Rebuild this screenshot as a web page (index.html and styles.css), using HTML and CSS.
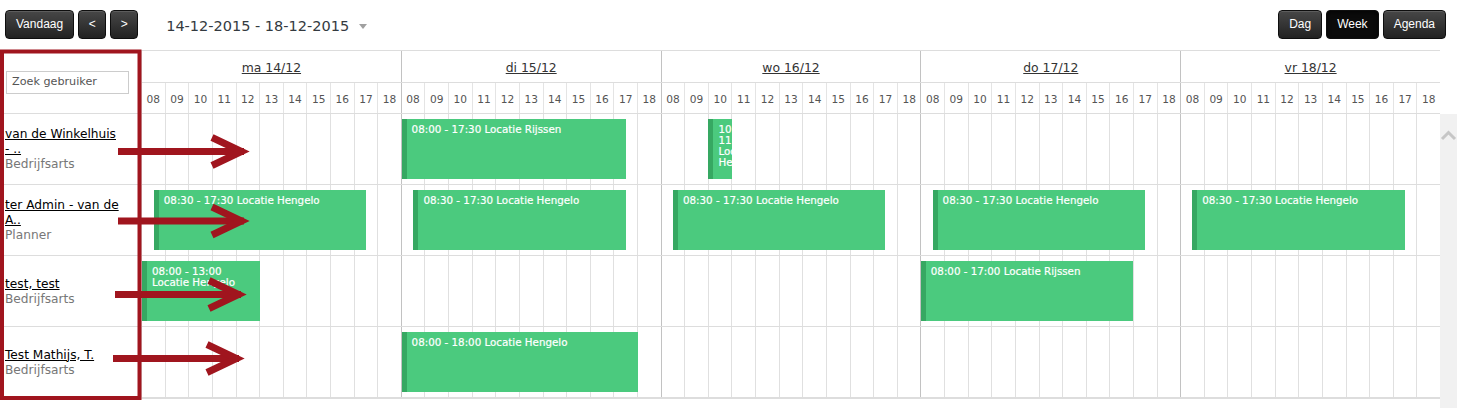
FILE: index.html
```html
<!DOCTYPE html>
<html lang="nl">
<head>
<meta charset="utf-8">
<title>Planning</title>
<link rel="stylesheet" href="styles.css">
</head>
<body>
<div class="page">
  <header class="toolbar">
    <div class="btn-group">
      <button class="btn">Vandaag</button>
      <button class="btn btn-icon">&lt;</button>
      <button class="btn btn-icon">&gt;</button>
    </div>
    <div class="range">14-12-2015 - 18-12-2015<span class="caret"></span></div>
    <div class="spacer"></div>
    <div class="btn-group">
      <button class="btn">Dag</button>
      <button class="btn active">Week</button>
      <button class="btn">Agenda</button>
    </div>
  </header>

  <div class="sched">
    <div class="corner"><input class="search" type="text" placeholder="Zoek gebruiker"></div>

    <div class="head">
      <div class="day-row">
        <div class="day-cell"><a href="#">ma 14/12</a></div>
        <div class="day-cell"><a href="#">di 15/12</a></div>
        <div class="day-cell"><a href="#">wo 16/12</a></div>
        <div class="day-cell"><a href="#">do 17/12</a></div>
        <div class="day-cell"><a href="#">vr 18/12</a></div>
      </div>
      <div class="hour-row">
        <div class="hday"><span class="h">08</span><span class="h">09</span><span class="h">10</span><span class="h">11</span><span class="h">12</span><span class="h">13</span><span class="h">14</span><span class="h">15</span><span class="h">16</span><span class="h">17</span><span class="h">18</span></div>
        <div class="hday"><span class="h">08</span><span class="h">09</span><span class="h">10</span><span class="h">11</span><span class="h">12</span><span class="h">13</span><span class="h">14</span><span class="h">15</span><span class="h">16</span><span class="h">17</span><span class="h">18</span></div>
        <div class="hday"><span class="h">08</span><span class="h">09</span><span class="h">10</span><span class="h">11</span><span class="h">12</span><span class="h">13</span><span class="h">14</span><span class="h">15</span><span class="h">16</span><span class="h">17</span><span class="h">18</span></div>
        <div class="hday"><span class="h">08</span><span class="h">09</span><span class="h">10</span><span class="h">11</span><span class="h">12</span><span class="h">13</span><span class="h">14</span><span class="h">15</span><span class="h">16</span><span class="h">17</span><span class="h">18</span></div>
        <div class="hday"><span class="h">08</span><span class="h">09</span><span class="h">10</span><span class="h">11</span><span class="h">12</span><span class="h">13</span><span class="h">14</span><span class="h">15</span><span class="h">16</span><span class="h">17</span><span class="h">18</span></div>
      </div>
    </div>

    <div class="head-gap"></div>

    <div class="res-col">
      <div class="res"><div class="res-inner"><a href="#" class="res-name">van de Winkelhuis - ..</a><div class="res-role">Bedrijfsarts</div></div></div>
      <div class="res"><div class="res-inner"><a href="#" class="res-name">ter Admin - van de A..</a><div class="res-role">Planner</div></div></div>
      <div class="res"><div class="res-inner"><a href="#" class="res-name">test, test</a><div class="res-role">Bedrijfsarts</div></div></div>
      <div class="res"><div class="res-inner"><a href="#" class="res-name">Test Mathijs, T.</a><div class="res-role">Bedrijfsarts</div></div></div>
    </div>

    <div class="tl">
      <div class="cols">
        <div class="cday"><i></i><i></i><i></i><i></i><i></i><i></i><i></i><i></i><i></i><i></i><i></i></div>
        <div class="cday"><i></i><i></i><i></i><i></i><i></i><i></i><i></i><i></i><i></i><i></i><i></i></div>
        <div class="cday"><i></i><i></i><i></i><i></i><i></i><i></i><i></i><i></i><i></i><i></i><i></i></div>
        <div class="cday"><i></i><i></i><i></i><i></i><i></i><i></i><i></i><i></i><i></i><i></i><i></i></div>
        <div class="cday"><i></i><i></i><i></i><i></i><i></i><i></i><i></i><i></i><i></i><i></i><i></i></div>
      </div>
      <div class="rows">
        <div class="row">
          <div class="ev" style="--s:11;--d:9.5">08:00 - 17:30 Locatie Rijssen</div>
          <div class="ev" style="--s:24;--d:1">10:00&nbsp;- 11:00 Locatie Hengelo</div>
        </div>
        <div class="row">
          <div class="ev" style="--s:0.5;--d:9">08:30 - 17:30 Locatie Hengelo</div>
          <div class="ev" style="--s:11.5;--d:9">08:30 - 17:30 Locatie Hengelo</div>
          <div class="ev" style="--s:22.5;--d:9">08:30 - 17:30 Locatie Hengelo</div>
          <div class="ev" style="--s:33.5;--d:9">08:30 - 17:30 Locatie Hengelo</div>
          <div class="ev" style="--s:44.5;--d:9">08:30 - 17:30 Locatie Hengelo</div>
        </div>
        <div class="row">
          <div class="ev" style="--s:0;--d:5">08:00 - 13:00 Locatie Hengelo</div>
          <div class="ev" style="--s:33;--d:9">08:00 - 17:00 Locatie Rijssen</div>
        </div>
        <div class="row">
          <div class="ev" style="--s:11;--d:10">08:00 - 18:00 Locatie Hengelo</div>
        </div>
      </div>
    </div>

    <div class="vscroll">
      <svg class="vs-arrow" width="17" height="30" viewBox="0 0 17 30"><path d="M2 25 L8.5 18.5 L15 25" fill="none" stroke="#c6c6c6" stroke-width="3"/></svg>
    </div>
  </div>

  <svg class="annot" width="1457" height="408" viewBox="0 0 1457 408">
    <defs>
      <g id="arr">
        <path d="M-132 0 H-6" />
        <path d="M-38 -14 L-8.5 0 L-38 14" />
      </g>
    </defs>
    <rect x="2" y="51.5" width="137.5" height="346.5" fill="none" stroke="#a0151e" stroke-width="4"/>
    <g fill="none" stroke="#a0151e" stroke-width="7" stroke-linejoin="miter" stroke-miterlimit="10">
      <use href="#arr" x="250" y="151.5"/>
      <use href="#arr" x="250" y="221"/>
      <use href="#arr" x="247" y="294.5"/>
      <use href="#arr" x="245" y="358.5"/>
    </g>
  </svg>
</div>
</body>
</html>
```

FILE: styles.css
```css
* { box-sizing: border-box; }

html, body {
  margin: 0;
  padding: 0;
  background: #fff;
}

body {
  font-family: "DejaVu Sans", Verdana, sans-serif;
  color: #333;
  overflow: hidden;
}

.page {
  position: relative;
  width: 1457px;
  height: 408px;
  overflow: hidden;
}

/* ---------- toolbar ---------- */
.toolbar {
  display: flex;
  align-items: flex-start;
  height: 50px;
  padding: 10px 11px 0 5px;
}

.btn-group {
  display: flex;
  gap: 4px;
}

.btn {
  height: 29px;
  padding: 0 10px;
  border: 1px solid #0e0e0e;
  border-radius: 4px;
  background: linear-gradient(#474747, #222);
  box-shadow: inset 0 1px 0 rgba(255,255,255,0.12);
  color: #fff;
  font-family: "Liberation Sans", Arial, sans-serif;
  font-size: 12px;
  line-height: 27px;
  cursor: pointer;
}

.btn-icon {
  width: 28px;
  padding: 0;
}

.btn.active {
  background: #0b0b0b;
  box-shadow: inset 0 2px 4px rgba(0,0,0,0.6);
}

.range {
  display: flex;
  align-items: center;
  margin-left: 28px;
  height: 29px;
  padding-top: 3px;
  font-size: 14.5px;
  color: #343a40;
}

.caret {
  width: 0;
  height: 0;
  margin-left: 10px;
  margin-top: 1px;
  border-left: 4px solid transparent;
  border-right: 4px solid transparent;
  border-top: 5px solid #a0a0a0;
}

.spacer { flex: 1; }

/* ---------- scheduler ---------- */
.sched {
  display: grid;
  grid-template-columns: 142px 1298px 17px;
  grid-template-rows: 64px auto;
}

.corner {
  display: flex;
  align-items: center;
  padding-left: 6px;
  border-top: 1px solid #ddd;
  border-bottom: 1px solid #ddd;
  border-right: 1px solid #ddd;
}

.search {
  width: 123px;
  height: 23px;
  margin: 0;
  padding: 0 5px 2px;
  border: 1px solid #ccc;
  border-radius: 0;
  font-family: "DejaVu Sans", Verdana, sans-serif;
  font-size: 11.2px;
  color: #555;
  outline: none;
}

.search::placeholder { color: #555; }

.head {
  border-top: 1px solid #ddd;
}

.day-row {
  display: flex;
  height: 32px;
  border-bottom: 1px solid #ddd;
}

.day-cell {
  flex: 1;
  display: flex;
  align-items: center;
  justify-content: center;
  border-left: 1px solid #c2c2c2;
  font-size: 12.4px;
  padding-top: 1px;
}

.day-cell:first-child { border-left: 0; }

.day-cell a {
  color: #333;
  text-decoration: underline;
}

.hour-row {
  display: flex;
  height: 31px;
  border-bottom: 1px solid #ddd;
}

.hday {
  flex: 1;
  display: flex;
  border-left: 1px solid #c2c2c2;
}

.hday:first-child { border-left: 0; }

.h {
  flex: 1;
  display: flex;
  align-items: center;
  justify-content: center;
  border-left: 1px solid #e4e4e4;
  font-size: 10.6px;
  color: #555;
  padding-top: 2px;
}

.h:first-child { border-left: 0; }

.head-gap { background: #fff; }

/* resources column */
.res-col {
  align-self: start;
  border-right: 1px solid #ddd;
  border-bottom: 1px solid #ddd;
}

.res {
  display: flex;
  align-items: center;
  height: 71px;
  padding-left: 5px;
  border-bottom: 1px solid #ddd;
}

.res-inner {
  width: 116px;
  font-size: 12.2px;
  line-height: 15px;
  padding-top: 1px;
}

.res-name {
  color: #000;
  text-decoration: underline;
}

.res-role {
  color: #777;
}

/* timeline */
.tl {
  align-self: start;
  display: grid;
}

.cols,
.rows {
  grid-area: 1 / 1;
}

.cols {
  display: flex;
}

.cday {
  flex: 1;
  display: flex;
  border-left: 1px solid #c2c2c2;
}

.cday:first-child { border-left: 0; }

.cday i {
  flex: 1;
  border-left: 1px solid #e0e0e0;
}

.cday i:first-child { border-left: 0; }

.rows {
  border-bottom: 1px solid #ddd;
}

.row {
  position: relative;
  height: 71px;
  border-bottom: 1px solid #ddd;
}

.ev {
  position: absolute;
  top: 5px;
  height: 60px;
  left: calc(var(--s) * 100% / 55);
  width: calc(var(--d) * 100% / 55);
  padding: 5px 5px 0 5px;
  background: #4bca7e;
  border-left: 5px solid #36a862;
  color: #fff;
  font-size: 10.3px;
  line-height: 11px;
  -webkit-text-stroke: 0.2px #fff;
  overflow: hidden;
}

.vscroll {
  height: 295px;
  background: #f1f1f1;
}

.vs-arrow { display: block; }

/* annotation overlay */
.annot {
  position: absolute;
  left: 0;
  top: 0;
  pointer-events: none;
}
```
